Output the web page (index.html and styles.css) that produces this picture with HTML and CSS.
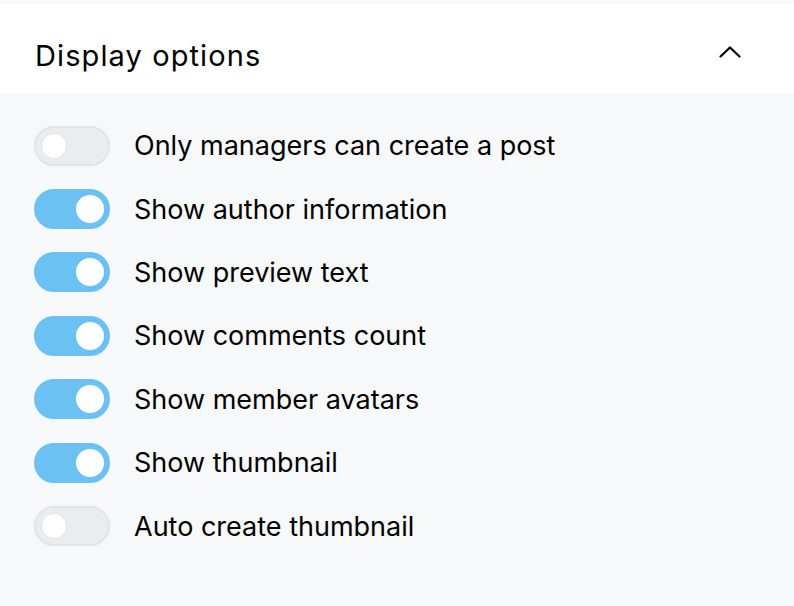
FILE: index.html
```html
<!DOCTYPE html>
<html lang="en">
  <head>
    <meta charset="UTF-8">
    <title>Display options</title>
    <link rel="stylesheet" href="styles.css">
  </head>
  <body>
    <section class="panel">
      <header class="panel-header">
        <h2>Display options</h2>
        <svg class="chevron" width="22" height="12" viewBox="0 0 22 12">
          <path d="M1.5 10.5 L11 1.5 L20.5 10.5" fill="none" stroke="#000" stroke-width="2.2" stroke-linecap="round" stroke-linejoin="round"/>
        </svg>
      </header>

      <ul class="options">
        <li><span class="toggle"></span>Only managers can create a post</li>
        <li><span class="toggle on"></span>Show author information</li>
        <li><span class="toggle on"></span>Show preview text</li>
        <li><span class="toggle on"></span>Show comments count</li>
        <li><span class="toggle on"></span>Show member avatars</li>
        <li><span class="toggle on"></span>Show thumbnail</li>
        <li><span class="toggle"></span>Auto create thumbnail</li>
      </ul>
    </section>
  </body>
</html>
```

FILE: styles.css
```css
body {
  margin: 0;
  background-color: #f7f8fa;
  font-family: Inter, "Liberation Sans", sans-serif;
  color: #000;
}
.panel {
  padding-top: 4px;
}
.panel-header {
  display: flex;
  align-items: center;
  justify-content: space-between;
  box-sizing: border-box;
  height: 89px;
  padding: 14px 53px 0 35px;
  background-color: #fff;
}
.panel-header h2 {
  margin: 0;
  font-size: 29px;
  font-weight: 400;
  letter-spacing: 1.1px;
}
.chevron {
  display: block;
  margin-top: -8px;
}
.options {
  list-style: none;
  margin: 0;
  padding: 21px 0 0 34px;
}
.options li {
  display: flex;
  align-items: center;
  height: 63.4px;
  font-size: 27px;
}
.toggle {
  position: relative;
  flex: none;
  width: 76px;
  height: 40px;
  margin-right: 24px;
  border-radius: 20px;
  box-sizing: border-box;
  border: 2px solid #e1e3e8;
  background-color: #ebecf0;
}
.toggle::after {
  content: "";
  position: absolute;
  top: 5px;
  left: 5px;
  width: 26px;
  height: 26px;
  border-radius: 50%;
  box-sizing: border-box;
  border: 1px solid #e3e5ea;
  background-color: #fff;
}
.toggle.on {
  border-color: #6bc1f1;
  background-color: #6bc1f1;
}
.toggle.on::after {
  top: 4px;
  left: auto;
  right: 4px;
  width: 28px;
  height: 28px;
  border: none;
}
```
